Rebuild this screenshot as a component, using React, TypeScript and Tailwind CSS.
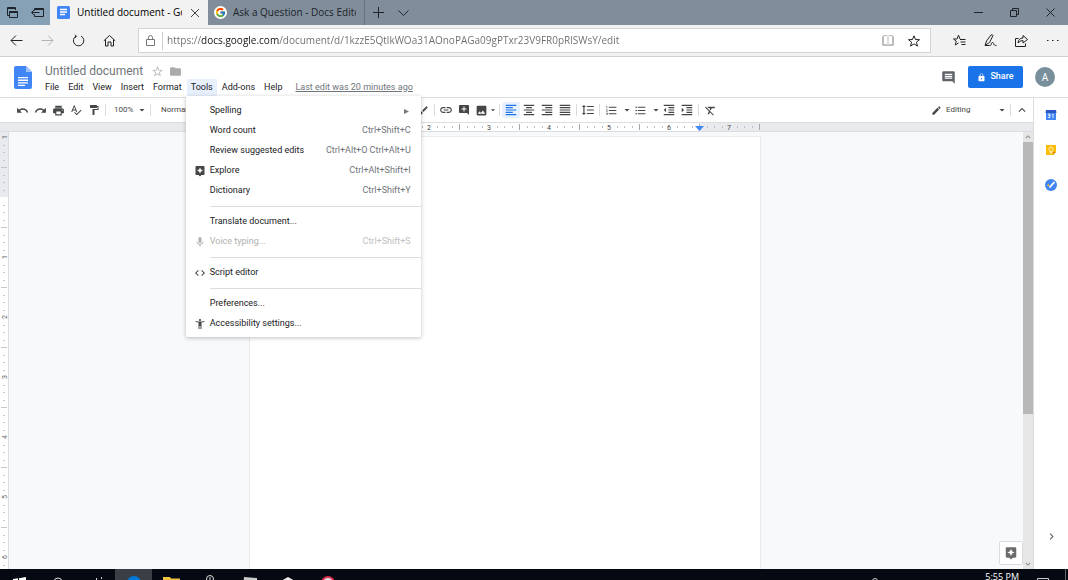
import { ReactNode } from 'react';
import clsx from 'clsx';
import {
  MdAccessibilityNew,
  MdAddComment,
  MdArrowDropDown,
  MdAssistant,
  MdBrush,
  MdChevronRight,
  MdCode,
  MdComment,
  MdEdit,
  MdExpandLess,
  MdFolder,
  MdFormatAlignCenter,
  MdFormatAlignJustify,
  MdFormatAlignLeft,
  MdFormatAlignRight,
  MdFormatBold,
  MdFormatClear,
  MdFormatColorText,
  MdFormatIndentDecrease,
  MdFormatIndentIncrease,
  MdFormatItalic,
  MdFormatLineSpacing,
  MdFormatListBulleted,
  MdFormatListNumbered,
  MdFormatPaint,
  MdFormatUnderlined,
  MdImage,
  MdKeyboardArrowDown,
  MdKeyboardArrowUp,
  MdLink,
  MdLock,
  MdMic,
  MdPrint,
  MdRedo,
  MdSpellcheck,
  MdStarBorder,
  MdUndo,
} from 'react-icons/md';
import { FcGoogle } from 'react-icons/fc';

const INCH = 60;

type MenuEntry = {
  label: string;
  shortcut?: string;
  icon?: ReactNode;
  disabled?: boolean;
  submenu?: boolean;
};

const toolsMenu: MenuEntry[][] = [
  [
    { label: 'Spelling', submenu: true },
    { label: 'Word count', shortcut: 'Ctrl+Shift+C' },
    { label: 'Review suggested edits', shortcut: 'Ctrl+Alt+O Ctrl+Alt+U' },
    { label: 'Explore', shortcut: 'Ctrl+Alt+Shift+I', icon: <MdAssistant size={12} /> },
    { label: 'Dictionary', shortcut: 'Ctrl+Shift+Y' },
  ],
  [
    { label: 'Translate document...' },
    { label: 'Voice typing...', shortcut: 'Ctrl+Shift+S', icon: <MdMic size={12} />, disabled: true },
  ],
  [{ label: 'Script editor', icon: <MdCode size={12} /> }],
  [
    { label: 'Preferences...' },
    { label: 'Accessibility settings...', icon: <MdAccessibilityNew size={12} /> },
  ],
];

const menus = ['File', 'Edit', 'View', 'Insert', 'Format', 'Tools', 'Add-ons', 'Help'];

function DocsIcon({ className }: { className?: string }) {
  return (
    <svg viewBox="0 0 18 23" className={className}>
      <path d="M2 0h10l6 6v15a2 2 0 0 1-2 2H2a2 2 0 0 1-2-2V2a2 2 0 0 1 2-2z" fill="#4285f4" />
      <path d="M12 0l6 6h-6z" fill="#a1c2fa" />
      <path d="M4 11h10v1.3H4zM4 13.6h10v1.3H4zM4 16.2h10v1.3H4zM4 18.8h7v1.3H4z" fill="#fff" />
    </svg>
  );
}

function TabBar() {
  return (
    <div className="flex h-[25px] shrink-0 items-stretch bg-[#808e9b] text-[#1d2328]">
      <div className="flex w-[50px] shrink-0 items-center justify-between bg-[#86a0b6] pr-1.5 pl-1.5">
        <button aria-label="Tabs you've set aside">
          <svg width="13" height="13" viewBox="0 0 13 13" fill="none" stroke="currentColor">
            <path d="M3.5 5.5h8v6h-8zM3.5 6.5h8" />
            <path d="M3 9.5H1.500v-8h8v2.500M1.500 2.500h8" />
          </svg>
        </button>
        <button aria-label="Set these tabs aside">
          <svg width="13" height="13" viewBox="0 0 13 13" fill="none" stroke="currentColor">
            <path d="M3.500 4.500v-2h9v8h-9v-2M3.500 3.500h9" />
            <path d="M8.500 6.500h-8M3 4L.5 6.500 3 9" />
          </svg>
        </button>
      </div>
      <div className="flex w-[158px] shrink-0 items-center bg-[#f2f2f2] pr-2 pl-[7px]">
        <svg width="13" height="13" viewBox="0 0 13 13" className="shrink-0">
          <rect width="13" height="13" rx="1.500" fill="#4285f4" />
          <path d="M3 3.500h7M3 6h7M3 8.500h5" stroke="#fff" strokeWidth="1.300" />
        </svg>
        <span className="ml-[7px] flex-1 overflow-hidden text-[10px] whitespace-nowrap text-black">
          Untitled document - Google Docs
        </span>
        <button aria-label="Close tab" className="ml-2">
          <svg width="10" height="10" viewBox="0 0 10 10" stroke="#444" fill="none">
            <path d="M1 1l8 8M9 1L1 9" />
          </svg>
        </button>
      </div>
      <div className="flex w-[157px] shrink-0 items-center border-r border-[#66727d] pr-2 pl-1.5">
        <span className="flex size-[13px] shrink-0 items-center justify-center rounded-full bg-white">
          <FcGoogle size={11} />
        </span>
        <span className="ml-1.5 flex-1 overflow-hidden text-[10px] whitespace-nowrap">
          Ask a Question - Docs Editors Help
        </span>
      </div>
      <button aria-label="New tab" className="flex w-[26px] items-center justify-center">
        <svg width="11" height="11" viewBox="0 0 11 11" stroke="currentColor">
          <path d="M5.500 0v11M0 5.500h11" />
        </svg>
      </button>
      <button aria-label="Show tab previews" className="flex w-6 items-center justify-center">
        <svg width="11" height="6" viewBox="0 0 11 6" fill="none" stroke="currentColor">
          <path d="M.5.500l5 5 5-5" />
        </svg>
      </button>
      <div className="ml-auto flex">
        <button aria-label="Minimize" className="flex w-9 items-center justify-center">
          <svg width="9" height="9" viewBox="0 0 9 9" stroke="currentColor">
            <path d="M0 4.500h9" />
          </svg>
        </button>
        <button aria-label="Restore" className="flex w-9 items-center justify-center">
          <svg width="9" height="9" viewBox="0 0 9 9" fill="none" stroke="currentColor">
            <path d="M.5 2.500h6v6h-6zM2.500 2.500v-2h6v6h-2" />
          </svg>
        </button>
        <button aria-label="Close" className="flex w-9 items-center justify-center">
          <svg width="9" height="9" viewBox="0 0 9 9" stroke="currentColor">
            <path d="M.5.500l8 8M8.500.500l-8 8" />
          </svg>
        </button>
      </div>
    </div>
  );
}

function NavButton({ label, muted, children }: { label: string; muted?: boolean; children: ReactNode }) {
  return (
    <button
      aria-label={label}
      className={clsx('flex w-[31px] items-center justify-center', muted ? 'text-[#b4b4b4]' : 'text-[#222]')}
    >
      <svg width="13" height="13" viewBox="0 0 13 13" fill="none" stroke="currentColor">
        {children}
      </svg>
    </button>
  );
}

function AddressRow() {
  return (
    <div className="flex h-8 shrink-0 items-stretch border-b border-[#d0d0d0] bg-[#f2f2f2]">
      <div className="flex w-[138px] shrink-0 pl-px">
        <NavButton label="Back">
          <path d="M12.500 6.500H1M6 1.500l-5 5 5 5" />
        </NavButton>
        <NavButton label="Forward" muted>
          <path d="M.5 6.500H12M7 1.500l5 5-5 5" />
        </NavButton>
        <NavButton label="Refresh">
          <path d="M4.200 2A5.200 5.200 0 1 0 9 2M3 .8l1.400 1.400L3 4" />
        </NavButton>
        <NavButton label="Home">
          <path d="M.8 6.800l5.700-5.300 5.700 5.300M2.500 5.500v6.500h2.500v-4h3v4h2.500v-6.500" />
        </NavButton>
      </div>
      <div className="my-[3px] flex flex-1 items-center border border-[#d4d4d4] bg-white">
        <svg width="9" height="11" viewBox="0 0 9 11" fill="none" stroke="#777" className="mx-[7px] shrink-0">
          <path d="M.5 4.500h8v6h-8zM2.500 4.500v-2a2 2 0 0 1 4 0v2" />
        </svg>
        <span className="h-[18px] w-px bg-[#ccc]" />
        {/* host name is darker than the rest of the url */}
        <input
          aria-label="Address"
          className="ml-1 flex-1 bg-[linear-gradient(90deg,#6b6b6b_34px,#111_34px,#111_112px,#6b6b6b_112px)] bg-clip-text text-[10px] text-transparent outline-none"
          defaultValue="https://docs.google.com/document/d/1kzzE5QtlkWOa31AOnoPAGa09gPTxr23V9FR0pRlSWsY/edit"
        />
        <button aria-label="Reading view" className="mr-3.5">
          <svg width="12" height="11" viewBox="0 0 12 11" fill="none" stroke="#bbb">
            <path d="M6 1.500v8M1.500.500h3.500l1 1 1-1h3.500v9H7l-1 1-1-1H1.500zM.5 1.500v9h11v-9" />
          </svg>
        </button>
        <button aria-label="Add to favorites" className="mr-2.5">
          <svg width="12" height="12" viewBox="0 0 12 12" fill="none" stroke="#222">
            <path d="M6 .8l1.500 3.700 4 .2-3.100 2.500 1.100 3.900L6 8.900l-3.500 2.200 1.100-3.900L.5 4.700l4-.2z" />
          </svg>
        </button>
      </div>
      <div className="ml-[13px] flex">
        <NavButton label="Hub">
          <path d="M7 5L5.500 1.200 4 5H.5l2.800 2.300L2.200 11 5.500 9M7 5.500h5.500M7.500 8h5M8.500 10.500h4" />
        </NavButton>
        <NavButton label="Add notes">
          <path d="M1 11.500L2.500 7 7 1q1.500-1 2 .5L5.500 8.500zM1 11.500h4.500c3 0 1-3 3-3s0 3 4 3" />
        </NavButton>
        <NavButton label="Share page">
          <path d="M3.500 4.500h-3v8h10v-3M3 9q.5-5 5-5V1.500l4.500 4L8 9V6.500Q5 6.500 3 9z" />
        </NavButton>
        <NavButton label="Settings and more">
          <path d="M1 6.500h1.500M6 6.500h1.500M11 6.500h1.500" />
        </NavButton>
      </div>
    </div>
  );
}

function ToolsMenu() {
  return (
    <div
      role="menu"
      className="absolute top-full -left-px z-20 w-[235px] rounded-b-xs bg-white pt-[5px] pb-[3px] shadow-[0_1px_4px_rgba(0,0,0,0.25)]"
    >
      {toolsMenu.map((group, i) => (
        <div key={group[0].label}>
          {i > 0 && <div className="my-[5px] ml-6 h-px bg-[#dadce0]" />}
          {group.map((entry) => (
            <button
              key={entry.label}
              role="menuitem"
              disabled={entry.disabled}
              className={clsx(
                'flex h-5 w-full items-center pr-2.5 text-left',
                entry.disabled ? 'text-[#b0b0b0]' : 'text-[#202124]',
              )}
            >
              <span className={clsx('w-6 pl-2', !entry.disabled && 'text-[#444746]')}>{entry.icon}</span>
              <span>{entry.label}</span>
              <span className={clsx('ml-auto', entry.disabled ? 'text-[#c0c0c0]' : 'text-[#70757a]')}>
                {entry.shortcut}
              </span>
              {entry.submenu && (
                <svg width="5" height="5" viewBox="0 0 5 5" className="mr-0.5">
                  <path d="M0 0l5 2.500-5 2.500z" fill="#777" />
                </svg>
              )}
            </button>
          ))}
        </div>
      ))}
    </div>
  );
}

function DocsHeader() {
  return (
    <header className="flex h-[41px] shrink-0 items-start border-b border-[#dadce0] bg-white">
      <a href="#home" aria-label="Docs home" className="mt-[9px] ml-3.5">
        <DocsIcon className="h-[23px] w-[18px]" />
      </a>
      <div className="ml-2 pt-1.5">
        <div className="flex h-4 items-center pl-[5px]">
          <input
            aria-label="Document title"
            className="w-[100px] text-[12px] text-[#70757a] outline-none"
            defaultValue="Untitled document"
          />
          <button aria-label="Star" className="ml-1.5 text-[#bbb]">
            <MdStarBorder size={13} />
          </button>
          <button aria-label="Move to folder" className="ml-[5px] text-[#aaa]">
            <MdFolder size={13} />
          </button>
        </div>
        <nav className="flex h-[17px] items-stretch gap-px pl-px text-[9px] text-[#202124]">
          {menus.map((menu) => (
            <div key={menu} className="relative flex">
              <button className={clsx('px-1', menu === 'Tools' && 'bg-[#e8f0fe]')}>{menu}</button>
              {menu === 'Tools' && <ToolsMenu />}
            </div>
          ))}
          <a href="#history" className="ml-2 self-center text-[#70757a] underline">
            Last edit was 20 minutes ago
          </a>
        </nav>
      </div>
      <div className="mt-[9px] mr-[13px] ml-auto flex items-center">
        <button aria-label="Open comment history" className="text-[#5f6368]">
          <MdComment size={15} />
        </button>
        <button className="ml-3 flex h-[22px] w-[55px] items-center justify-center gap-1 rounded-xs bg-[#1a73e8] text-[9px] font-medium text-white">
          <MdLock size={9} />
          Share
        </button>
        <button className="ml-3 size-5 rounded-full bg-[#78909c] text-[10px] text-white">A</button>
      </div>
    </header>
  );
}

function ToolButton({
  label,
  active,
  wide,
  children,
}: {
  label: string;
  active?: boolean;
  wide?: boolean;
  children: ReactNode;
}) {
  return (
    <button
      aria-label={label}
      className={clsx(
        'flex h-4 shrink-0 items-center rounded-xs',
        wide ? 'w-[29px] gap-[3px] pl-[3px]' : 'w-[18px] justify-center',
        active ? 'bg-[#e8f0fe] text-[#1a73e8]' : 'text-[#444746]',
      )}
    >
      {children}
      {wide && <MdArrowDropDown size={12} className="shrink-0" />}
    </button>
  );
}

function ToolSelect({ label, value, className }: { label: string; value: string; className: string }) {
  return (
    <div className={clsx('relative flex shrink-0 items-center text-[#444746]', className)}>
      <select aria-label={label} className="w-full appearance-none text-[8px] outline-none">
        <option>{value}</option>
      </select>
      <MdArrowDropDown size={12} className="pointer-events-none absolute right-0" />
    </div>
  );
}

function Divider() {
  return <span className="mx-0.5 h-3 w-px shrink-0 bg-[#dadce0]" />;
}

function Toolbar() {
  return (
    <div className="flex h-[25px] shrink-0 items-center border-b border-[#dadce0] bg-white pr-0.5 pl-[13px]">
      <ToolButton label="Undo"><MdUndo size={13} /></ToolButton>
      <ToolButton label="Redo"><MdRedo size={13} /></ToolButton>
      <ToolButton label="Print"><MdPrint size={13} /></ToolButton>
      <ToolButton label="Spelling check"><MdSpellcheck size={12} /></ToolButton>
      <ToolButton label="Paint format"><MdFormatPaint size={12} /></ToolButton>
      <Divider />
      <ToolSelect label="Zoom" value="100%" className="w-10 pl-1.5" />
      <Divider />
      <ToolSelect label="Styles" value="Normal text" className="w-[74px] pl-2" />
      <Divider />
      <ToolSelect label="Font" value="Arial" className="w-16 pl-2" />
      <Divider />
      <ToolSelect label="Font size" value="11" className="w-9 pl-2" />
      <Divider />
      <ToolButton label="Bold"><MdFormatBold size={12} /></ToolButton>
      <ToolButton label="Italic"><MdFormatItalic size={12} /></ToolButton>
      <ToolButton label="Underline"><MdFormatUnderlined size={12} /></ToolButton>
      <ToolButton label="Text color"><MdFormatColorText size={12} /></ToolButton>
      <ToolButton label="Highlight color"><MdBrush size={11} /></ToolButton>
      <Divider />
      <ToolButton label="Insert link"><MdLink size={14} /></ToolButton>
      <ToolButton label="Add comment"><MdAddComment size={12} /></ToolButton>
      <button aria-label="Insert image" className="flex w-6 shrink-0 items-center pl-0.5 text-[#444746]">
        <MdImage size={13} className="shrink-0" />
        <MdArrowDropDown size={10} className="shrink-0" />
      </button>
      <Divider />
      <ToolButton label="Left align" active><MdFormatAlignLeft size={14} /></ToolButton>
      <ToolButton label="Center align"><MdFormatAlignCenter size={14} /></ToolButton>
      <ToolButton label="Right align"><MdFormatAlignRight size={14} /></ToolButton>
      <ToolButton label="Justify"><MdFormatAlignJustify size={14} /></ToolButton>
      <Divider />
      <ToolButton label="Line spacing"><MdFormatLineSpacing size={14} /></ToolButton>
      <Divider />
      <ToolButton label="Numbered list" wide><MdFormatListNumbered size={13} className="shrink-0" /></ToolButton>
      <ToolButton label="Bulleted list" wide><MdFormatListBulleted size={13} className="shrink-0" /></ToolButton>
      <ToolButton label="Decrease indent"><MdFormatIndentDecrease size={14} /></ToolButton>
      <ToolButton label="Increase indent"><MdFormatIndentIncrease size={14} /></ToolButton>
      <Divider />
      <ToolButton label="Clear formatting"><MdFormatClear size={13} /></ToolButton>

      <div className="ml-auto flex items-center">
        <MdEdit size={11} className="text-[#444746]" />
        <ToolSelect label="Mode" value="Editing" className="w-[66px] pl-1" />
        <Divider />
        <ToolButton label="Hide the menus"><MdExpandLess size={14} /></ToolButton>
      </div>
    </div>
  );
}

function HorizontalRuler() {
  const ticks = Array.from({ length: 69 }, (_, i) => i);
  return (
    <div className="h-[9px] shrink-0 border-b border-[#dadce0] bg-[#e8eaed] pr-6">
      <svg width="511" height="8" viewBox="0 0 511 8" className="mx-auto block overflow-visible">
        <rect x={INCH} y="0" width={INCH * 6.5} height="8" fill="#fff" />
        {ticks.map((i) => {
          if (i % 8 === 0) return null;
          const x = Math.round((i * INCH) / 8) + 0.5;
          const half = i % 4 === 0;
          return <path key={i} d={half ? `M${x} 1v6` : `M${x} 3v2`} stroke={half ? '#a5a8ab' : '#bbbec2'} />;
        })}
        {[1, 2, 3, 4, 5, 6, 7].map((n) => (
          <text key={n} x={n * INCH + INCH} y="7" textAnchor="middle" fontSize="7" fill="#3c4043">
            {n}
          </text>
        ))}
        <path d="M446 3h9l-4.500 5z" fill="#4285f4" />
      </svg>
    </div>
  );
}

function VerticalRuler() {
  const ticks = Array.from({ length: 60 }, (_, i) => i);
  return (
    <div className="w-[9px] shrink-0 overflow-hidden border-r border-[#dadce0] bg-white">
      <svg width="8" height="460" viewBox="0 0 8 460" className="block">
        <rect width="8" height="65" fill="#e8eaed" />
        {ticks.map((i) => {
          if (i % 8 === 0) return null;
          const y = Math.round((i * INCH) / 8) + 5.5;
          return <path key={i} d={i % 4 === 0 ? `M1 ${y}h6` : `M3 ${y}h2`} stroke="#c4c7ca" />;
        })}
        {[1, 0, 1, 2, 3, 4, 5, 6].map((n, i) =>
          n === 0 ? null : (
            <text
              key={i}
              textAnchor="middle"
              fontSize="7"
              fill="#5f6368"
              transform={`translate(7 ${i * INCH + 5}) rotate(-90)`}
            >
              {n}
            </text>
          ),
        )}
      </svg>
    </div>
  );
}

function Scrollbar() {
  return (
    <div className="flex w-2.5 shrink-0 flex-col items-center bg-[#e6e6e6] text-[#888]">
      <MdKeyboardArrowUp size={10} className="shrink-0" />
      <div className="h-[272px] w-full bg-[#b8b8b8]" />
      <MdKeyboardArrowDown size={10} className="mt-auto shrink-0" />
    </div>
  );
}

function SidePanel() {
  return (
    <aside className="flex w-[35px] shrink-0 flex-col items-center border-l border-[#dadce0] bg-white pt-[11px]">
      <button aria-label="Calendar">
        <svg width="12" height="12" viewBox="0 0 12 12">
          <rect x="1" y="1" width="10" height="10" fill="#4285f4" />
          <path d="M1 1h10l.5 3H.5z" fill="#2a56c6" />
          <path d="M3 5h2v1.500H3.500H5V8.500H3M7 5.500l1-.5v4" fill="none" stroke="#fff" strokeWidth=".8" />
        </svg>
      </button>
      <button aria-label="Keep" className="mt-[23px]">
        <svg width="12" height="12" viewBox="0 0 12 12">
          <path d="M1 1h10v7l-3 3H1z" fill="#fbbc04" />
          <path d="M8 11V8h3z" fill="#e08b00" />
          <path d="M5 8V6.800a2 2 0 1 1 2 0V8zM5 9h2" fill="none" stroke="#fff" strokeWidth=".8" />
        </svg>
      </button>
      <button aria-label="Tasks" className="mt-[23px]">
        <svg width="12" height="12" viewBox="0 0 12 12">
          <circle cx="6" cy="6" r="6" fill="#4285f4" />
          <path d="M5 7.800L9 3.500" stroke="#fff" strokeWidth="1.800" strokeLinecap="round" />
          <circle cx="3.300" cy="6.300" r="1" fill="#fbbc04" />
        </svg>
      </button>
      <button aria-label="Hide side panel" className="mt-auto mb-[26px] text-[#5f6368]">
        <MdChevronRight size={13} />
      </button>
    </aside>
  );
}

function Editor() {
  return (
    <div className="flex min-h-0 flex-1">
      <VerticalRuler />
      <div className="relative min-w-0 flex-1 bg-[#f8f9fa] pt-1 pr-[23px]">
        <div className="mx-auto h-full w-[512px] border border-b-0 border-[#e8eaed] bg-white" />
        <button
          aria-label="Explore"
          className="absolute right-0 bottom-1 flex size-6 items-center justify-center rounded-xs border border-[#dadce0] bg-white text-[#6b6b6b]"
        >
          <MdAssistant size={14} />
        </button>
      </div>
      <Scrollbar />
    </div>
  );
}

// Only the top strip of the taskbar shows, the rest of each icon is cut off below
function Taskbar() {
  return (
    <div className="flex h-[11px] shrink-0 items-start overflow-hidden bg-[#050a12] text-white">
      <button aria-label="Start" className="flex w-[38px] justify-center pt-2">
        <svg width="13" height="12" viewBox="0 0 13 12" fill="#fff"><path d="M0 2l5-.7V6H0zM6 1.200L13 0v6H6z" /></svg>
      </button>
      <button aria-label="Search" className="flex w-[39px] justify-center pt-2">
        <svg width="10" height="12" viewBox="0 0 10 12" fill="none" stroke="#ddd"><circle cx="5" cy="5" r="4" /></svg>
      </button>
      <button aria-label="Task view" className="flex w-[38px] justify-center pt-2">
        <svg width="14" height="12" viewBox="0 0 14 12" fill="none" stroke="#ccc"><path d="M.5 3v8M7.500 1v10M12.500 0v2M12.500 3v9" /></svg>
      </button>
      <button aria-label="Edge" className="flex h-[11px] w-[37px] justify-center bg-[#3a3f46] pt-[7px]">
        <svg width="14" height="14" viewBox="0 0 14 14"><circle cx="7" cy="7" r="7" fill="#0078d7" /></svg>
      </button>
      <button aria-label="File Explorer" className="flex w-[39px] justify-center pt-2">
        <svg width="17" height="12" viewBox="0 0 17 12"><path d="M0 0h7l1 1.500h9V12H0z" fill="#f5c542" /></svg>
      </button>
      <button aria-label="Store" className="flex w-[38px] justify-center pt-1.5">
        <svg width="10" height="14" viewBox="0 0 10 14" fill="none" stroke="#ddd"><circle cx="5" cy="4" r="3.500" /><path d="M5 2v6" /></svg>
      </button>
      <button aria-label="Mail" className="flex w-[42px] justify-center pt-2">
        <svg width="14" height="12" viewBox="0 0 14 12"><path d="M1 0l13 1v11H0z" fill="#ccc" /></svg>
      </button>
      <button aria-label="Dropbox" className="flex w-[33px] justify-center pt-2">
        <svg width="14" height="12" viewBox="0 0 14 12"><path d="M7 0l7 4v8H0V4z" fill="#eee" /></svg>
      </button>
      <button aria-label="Paint" className="flex w-[48px] justify-center pt-[7px]">
        <svg width="14" height="14" viewBox="0 0 14 14"><circle cx="7" cy="7" r="6" fill="#ddd" stroke="#d9304f" strokeWidth="2" /></svg>
      </button>
      <div className="ml-auto flex items-start">
        <svg width="6" height="11" viewBox="0 0 6 11" fill="none" stroke="#ccc" className="mr-[107px]"><circle cx="3" cy="12" r="2.500" /></svg>
        <time className="mt-[3px] text-[9px] leading-[10px]">5:55 PM</time>
        <svg width="12" height="11" viewBox="0 0 12 11" fill="none" stroke="#ccc" className="mr-4 ml-[18px]"><path d="M.5 12V9.500h11V12" /></svg>
        <span className="mr-0.5 h-[11px] w-px bg-[#666]" />
      </div>
    </div>
  );
}

export default function App() {
  return (
    <div className="flex h-screen flex-col overflow-hidden bg-white font-['Open_Sans',sans-serif]">
      <TabBar />
      <AddressRow />
      <main className="flex min-h-0 flex-1 flex-col font-[Roboto,sans-serif]">
        <DocsHeader />
        <div className="flex min-h-0 flex-1">
          <div className="flex min-w-0 flex-1 flex-col">
            <Toolbar />
            <HorizontalRuler />
            <Editor />
          </div>
          <SidePanel />
        </div>
      </main>
      <Taskbar />
    </div>
  );
}
